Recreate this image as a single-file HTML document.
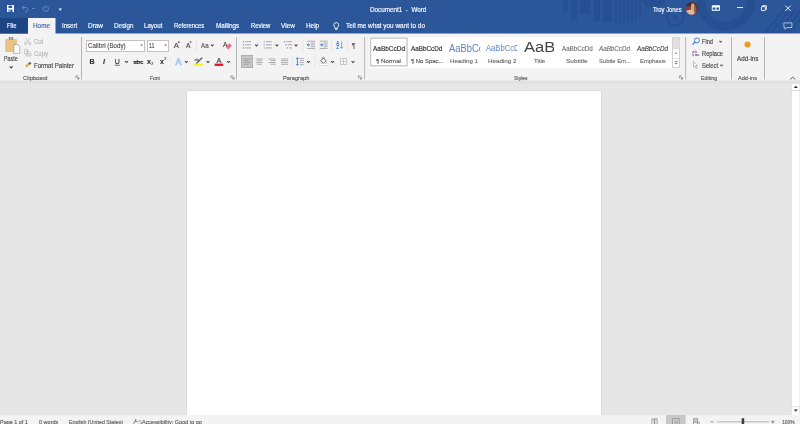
<!DOCTYPE html>
<html><head><meta charset="utf-8"><title>Document1 - Word</title>
<style>
html,body{margin:0;padding:0;}
body{width:800px;height:424px;overflow:hidden;position:relative;background:linear-gradient(to bottom,#2b579a 0,#2b579a 33.5px,#f3f3f3 33.5px,#f3f3f3 80.5px,#e6e6e6 80.5px,#e6e6e6 415px,#f3f3f3 415px);font-family:"Liberation Sans",sans-serif;}
.t{position:absolute;white-space:nowrap;line-height:1;-webkit-text-stroke:0.14px;}
.b{position:absolute;display:block;overflow:visible;}
#root{position:absolute;left:0;top:0;width:800px;height:424px;overflow:hidden;will-change:transform;}
</style></head><body><div id="root">
<svg class="b" style="left:0px;top:70px" width="800" height="345"><rect x="0.00" y="0.00" width="800.00" height="345.00" fill="#e6e6e6"/></svg>
<svg class="b" style="left:0px;top:30px" width="800" height="51"><rect x="0.00" y="0.00" width="800.00" height="50.50" fill="#f3f3f3"/></svg>
<svg class="b" style="left:0px;top:0px" width="800" height="34"><rect x="0.00" y="0.00" width="800.00" height="33.50" fill="#2b579a"/></svg>
<svg class="b" style="left:0px;top:0px" width="801" height="35" viewBox="0.00 0.00 801 35"><defs><clipPath id="tb"><rect x="0" y="0" width="800" height="33"/></clipPath></defs><g clip-path="url(#tb)"><rect x="563" y="0" width="5" height="12" fill="#264f91"/><rect x="571" y="0" width="6" height="20" fill="#264f91"/><rect x="580" y="0" width="10" height="14" fill="#264f91"/><rect x="594" y="0" width="6" height="21" fill="#264f91"/><rect x="603" y="0" width="9" height="22" fill="#264f91"/><rect x="615" y="0" width="2" height="24" fill="#264f91"/><rect x="619" y="0" width="2" height="23" fill="#264f91"/><rect x="623" y="0" width="2" height="24" fill="#264f91"/><rect x="627" y="0" width="2" height="22" fill="#264f91"/><rect x="631" y="0" width="2" height="23" fill="#264f91"/><rect x="635" y="0" width="2" height="20" fill="#264f91"/><rect x="639" y="0" width="2" height="18" fill="#264f91"/><circle cx="675.5" cy="17.5" r="2.6" fill="#264f91"/><circle cx="675.5" cy="17.5" r="8.4" fill="none" stroke="#264f91" stroke-width="2.3"/><path d="M641 0 H666 Q663 7.5 652 7.5 Q644 7.5 641 0 Z" fill="#264f91"/><circle cx="726" cy="1" r="25" fill="none" stroke="#264f91" stroke-width="9"/><path d="M765 33.5 L784 9" stroke="#264f91" stroke-width="2.5" fill="none"/><path d="M771 33.5 L790 9" stroke="#264f91" stroke-width="2.5" fill="none"/><path d="M777 33.5 L796 9" stroke="#264f91" stroke-width="2.5" fill="none"/><path d="M783 33.5 L802 9" stroke="#264f91" stroke-width="2.5" fill="none"/><path d="M789 33.5 L808 9" stroke="#264f91" stroke-width="2.5" fill="none"/><path d="M703 12 L715 27" stroke="#2b579a" stroke-width="0.8" fill="none"/><path d="M708 12 L720 27" stroke="#2b579a" stroke-width="0.8" fill="none"/><path d="M713 12 L725 27" stroke="#2b579a" stroke-width="0.8" fill="none"/><path d="M718 12 L730 27" stroke="#2b579a" stroke-width="0.8" fill="none"/></g></svg>
<svg class="b" style="left:0px;top:18px" width="28" height="16"><rect x="0.00" y="0.00" width="28.00" height="15.50" fill="#1d4584"/></svg>
<svg class="b" style="left:28px;top:18px" width="28" height="16"><rect x="0.00" y="0.00" width="27.50" height="16.00" fill="#f3f3f3"/></svg>
<svg class="b" style="left:0px;top:80px" width="800" height="4"><rect x="0.00" y="0.60" width="800.00" height="3.20" fill="#e1e1e1"/></svg>
<div class="b" style="left:186.80px;top:91.30px;width:414.20px;height:324.00px;background:#fff;box-shadow:0 0 1px rgba(0,0,0,0.25);"></div>
<svg class="b" style="left:791px;top:83px" width="9" height="332"><rect x="0.30" y="0.40" width="8.70" height="331.60" fill="#fff"/></svg>
<svg class="b" style="left:791px;top:83px" width="1" height="332"><rect x="0.20" y="0.40" width="0.60" height="331.60" fill="#d6d6d6"/></svg>
<svg class="b" style="left:799px;top:83px" width="1" height="332"><rect x="0.50" y="0.40" width="0.50" height="331.60" fill="#dcdcdc"/></svg>
<svg class="b" style="left:791px;top:83px" width="9" height="1"><rect x="0.30" y="0.30" width="8.70" height="0.50" fill="#d6d6d6"/></svg>
<svg class="b" style="left:791px;top:90px" width="9" height="1"><rect x="0.50" y="0.00" width="8.50" height="1.00" fill="#d9d9d9"/></svg>
<svg class="b" style="left:791px;top:406px" width="9" height="2"><rect x="0.50" y="0.40" width="8.50" height="0.80" fill="#d9d9d9"/></svg>
<svg class="b" style="left:793px;top:409px" width="6" height="4" viewBox="-0.70 -0.55 6 4"><path d="M0 0 L4.2 0 L2.1 2.1 Z" fill="#333"/></svg>
<svg class="b" style="left:793px;top:85px" width="6" height="4" viewBox="-0.80 -0.60 6 4"><path d="M0 2.3 L2 0 L4 2.3 Z" fill="#333"/></svg>
<svg class="b" style="left:0px;top:415px" width="800" height="9"><rect x="0.00" y="0.00" width="800.00" height="9.00" fill="#f3f3f3"/></svg>
<svg class="b" style="left:7px;top:5px" width="8" height="8" viewBox="0.00 0.00 8 8"><path d="M0 0H7V7H0Z" fill="#fff"/><rect x="1.5" y="0.6" width="3.6" height="2.4" fill="#2b579a"/><rect x="1.6" y="4.6" width="3.8" height="2.4" fill="#2b579a"/><rect x="2.4" y="5.2" width="1" height="1.4" fill="#fff"/></svg>
<svg class="b" style="left:21px;top:5px" width="11" height="8" viewBox="-0.50 0.00 11 8"><path d="M0.8 2.6 H5.2 A2.3 2.3 0 0 1 5.2 6.6 H3.5" fill="none" stroke="#6f8fc6" stroke-width="0.9"/><path d="M2.8 0.6 L0.8 2.6 L2.8 4.6" fill="none" stroke="#6f8fc6" stroke-width="0.9"/></svg>
<svg class="b" style="left:32px;top:8px" width="3" height="1"><rect x="0.00" y="0.20" width="3.00" height="0.80" fill="#6f8fc6"/></svg>
<svg class="b" style="left:42px;top:5px" width="9" height="8" viewBox="0.00 0.00 9 8"><path d="M5.2 1.4 A2.7 2.7 0 1 1 2.4 1.4" fill="none" stroke="#6f8fc6" stroke-width="0.9"/><path d="M3.8 0.3 V3.2" stroke="#6f8fc6" stroke-width="0.9"/></svg>
<svg class="b" style="left:58px;top:8px" width="5" height="4" viewBox="-0.50 -0.50 5 4"><path d="M0 0H3.5L1.75 2.5Z" fill="#e8eef8"/></svg>
<div class="t" style="left:370.00px;top:7.00px;font-size:6.6px;color:#fff;transform:scaleX(0.9577);transform-origin:0 0;">Document1 &nbsp;-&nbsp; Word</div>
<div class="t" style="left:652.50px;top:7.00px;font-size:6.6px;color:#fff;transform:scaleX(0.8896);transform-origin:0 0;">Troy Jones</div>
<svg class="b" style="left:685px;top:1px" width="15" height="15" viewBox="-0.50 -0.90 15 15"><defs><clipPath id="av"><circle cx="6.5" cy="6.5" r="6.4"/></clipPath></defs><g clip-path="url(#av)"><rect width="13" height="13" fill="#3f2c36"/><path d="M7 0 H13 V13 H9 Z" fill="#5d3a33"/><ellipse cx="2.6" cy="7" rx="2.6" ry="3" fill="#8c3d33"/><ellipse cx="7.2" cy="6" rx="1.9" ry="4.6" fill="#d7a58e"/><ellipse cx="5" cy="10.6" rx="4.6" ry="2.8" fill="#e2b4a2"/><ellipse cx="9.6" cy="8" rx="1.2" ry="3.4" fill="#9a5c4a"/></g></svg>
<svg class="b" style="left:711px;top:5px" width="11" height="7" viewBox="-0.80 -0.30 11 7"><rect x="0" y="0" width="8.2" height="5.4" rx="0.6" fill="#fff"/><rect x="0.9" y="2.2" width="2.7" height="2.2" fill="#2b579a"/><rect x="4.6" y="2.2" width="2.7" height="2.2" fill="#2b579a"/></svg>
<svg class="b" style="left:737px;top:7px" width="6" height="1"><rect x="0.00" y="0.00" width="6.00" height="0.90" fill="#fff"/></svg>
<svg class="b" style="left:761px;top:5px" width="7" height="8" viewBox="0.00 -0.20 7 8"><rect x="0.45" y="1.45" width="3.9" height="3.9" rx="0.5" fill="none" stroke="#fff" stroke-width="0.9"/><path d="M1.5 1.4 V0.45 H5.3 V4.3 H4.4" fill="none" stroke="#fff" stroke-width="0.9"/></svg>
<svg class="b" style="left:785px;top:5px" width="7" height="8" viewBox="0.00 -0.30 7 8"><path d="M0.3 0.3 L5.7 5.7 M5.7 0.3 L0.3 5.7" stroke="#fff" stroke-width="0.9"/></svg>
<svg class="b" style="left:783px;top:22px" width="11" height="9" viewBox="-0.50 -0.50 11 9"><path d="M0.4 0.4 H8.4 V5 H3.4 L1.6 6.9 V5 H0.4 Z" fill="none" stroke="#dfe7f5" stroke-width="0.7"/></svg>
<div class="t" style="left:6.60px;top:23.00px;font-size:6.6px;color:#fff;transform:scaleX(0.8847);transform-origin:0 0;">File</div>
<div class="t" style="left:33.00px;top:23.00px;font-size:6.6px;color:#4767a3;transform:scaleX(0.9663);transform-origin:0 0;">Home</div>
<div class="t" style="left:61.60px;top:23.00px;font-size:6.6px;color:#fff;transform:scaleX(0.9212);transform-origin:0 0;">Insert</div>
<div class="t" style="left:87.60px;top:23.00px;font-size:6.6px;color:#fff;transform:scaleX(0.9746);transform-origin:0 0;">Draw</div>
<div class="t" style="left:113.60px;top:23.00px;font-size:6.6px;color:#fff;transform:scaleX(0.9449);transform-origin:0 0;">Design</div>
<div class="t" style="left:144.40px;top:23.00px;font-size:6.6px;color:#fff;transform:scaleX(0.9287);transform-origin:0 0;">Layout</div>
<div class="t" style="left:174.00px;top:23.00px;font-size:6.6px;color:#fff;transform:scaleX(0.8982);transform-origin:0 0;">References</div>
<div class="t" style="left:215.80px;top:23.00px;font-size:6.6px;color:#fff;transform:scaleX(0.9592);transform-origin:0 0;">Mailings</div>
<div class="t" style="left:250.70px;top:23.00px;font-size:6.6px;color:#fff;transform:scaleX(0.8925);transform-origin:0 0;">Review</div>
<div class="t" style="left:281.00px;top:23.00px;font-size:6.6px;color:#fff;transform:scaleX(0.9727);transform-origin:0 0;">View</div>
<div class="t" style="left:305.90px;top:23.00px;font-size:6.6px;color:#fff;transform:scaleX(0.9659);transform-origin:0 0;">Help</div>
<svg class="b" style="left:333px;top:22px" width="8" height="10" viewBox="0.00 0.00 8 10"><path d="M3.25 0.5 A2.6 2.6 0 0 1 4.6 5.2 V6.4 H1.9 V5.2 A2.6 2.6 0 0 1 3.25 0.5 Z" fill="none" stroke="#fff" stroke-width="0.85"/><path d="M2.1 7.4 H4.4" stroke="#fff" stroke-width="0.85"/></svg>
<div class="t" style="left:346.00px;top:23.00px;font-size:6.6px;color:#fff;transform:scaleX(0.9708);transform-origin:0 0;">Tell me what you want to do</div>
<svg class="b" style="left:81px;top:37px" width="1" height="43"><rect x="0.10" y="0.00" width="0.90" height="42.50" fill="#aeaeae"/></svg>
<svg class="b" style="left:236px;top:37px" width="1" height="43"><rect x="0.10" y="0.00" width="0.90" height="42.50" fill="#aeaeae"/></svg>
<svg class="b" style="left:364px;top:37px" width="2" height="43"><rect x="0.20" y="0.00" width="0.90" height="42.50" fill="#aeaeae"/></svg>
<svg class="b" style="left:685px;top:37px" width="2" height="43"><rect x="0.20" y="0.00" width="0.90" height="42.50" fill="#aeaeae"/></svg>
<svg class="b" style="left:731px;top:37px" width="1" height="43"><rect x="0.10" y="0.00" width="0.90" height="42.50" fill="#aeaeae"/></svg>
<svg class="b" style="left:764px;top:37px" width="1" height="43"><rect x="0.00" y="0.00" width="0.90" height="42.50" fill="#aeaeae"/></svg>
<svg class="b" style="left:170px;top:56px" width="1" height="11"><rect x="0.30" y="0.40" width="0.70" height="10.60" fill="#e2e2e2"/></svg>
<svg class="b" style="left:196px;top:40px" width="1" height="12"><rect x="0.30" y="0.00" width="0.70" height="12.00" fill="#e2e2e2"/></svg>
<svg class="b" style="left:302px;top:40px" width="2" height="12"><rect x="0.70" y="0.00" width="0.70" height="12.00" fill="#e2e2e2"/></svg>
<svg class="b" style="left:331px;top:40px" width="1" height="12"><rect x="0.10" y="0.00" width="0.70" height="12.00" fill="#e2e2e2"/></svg>
<svg class="b" style="left:346px;top:40px" width="2" height="12"><rect x="0.90" y="0.00" width="0.70" height="12.00" fill="#e2e2e2"/></svg>
<svg class="b" style="left:291px;top:56px" width="2" height="12"><rect x="0.90" y="0.00" width="0.70" height="12.00" fill="#e2e2e2"/></svg>
<svg class="b" style="left:314px;top:56px" width="2" height="12"><rect x="0.70" y="0.00" width="0.70" height="12.00" fill="#e2e2e2"/></svg>
<svg class="b" style="left:5px;top:38px" width="17" height="17" viewBox="0.00 0.00 17 17"><rect x="0.2" y="0.9" width="11.8" height="13" rx="0.8" fill="#eac282"/><rect x="3.8" y="-0.9" width="4.6" height="2.4" rx="0.9" fill="#7a7a7a"/><rect x="5" y="-0.3" width="2.2" height="0.9" fill="#f3f3f3"/><path d="M8.8 6.5 H12.6 L14.8 8.7 V15.4 H8.8 Z" fill="#fff" stroke="#8a8a8a" stroke-width="0.6"/></svg>
<div class="t" style="left:4.40px;top:56.00px;font-size:6.6px;color:#444;transform:scaleX(0.8119);transform-origin:0 0;">Paste</div>
<svg class="b" style="left:9px;top:65px" width="6" height="5" viewBox="-0.20 -0.95 6 5"><path d="M0.5 0.5 L2.0 2.0 L3.5 0.5" fill="none" stroke="#424242" stroke-width="1.05"/></svg>
<svg class="b" style="left:24px;top:38px" width="9" height="8" viewBox="0.00 0.00 9 8"><path d="M1.5 0.3 L5.3 4.8 M6 0.3 L2.2 4.8" stroke="#b4b4b4" stroke-width="0.7" fill="none"/><circle cx="1.6" cy="5.5" r="1.1" fill="none" stroke="#b4b4b4" stroke-width="0.7"/><circle cx="5.9" cy="5.5" r="1.1" fill="none" stroke="#b4b4b4" stroke-width="0.7"/></svg>
<div class="t" style="left:34.00px;top:39.00px;font-size:6.6px;color:#b4b4b4;transform:scaleX(0.8767);transform-origin:0 0;">Cut</div>
<svg class="b" style="left:24px;top:49px" width="9" height="9" viewBox="0.00 0.00 9 9"><path d="M0.4 0.4 H3.6 V5 H0.4 Z M2.6 2.4 H5.4 L6.8 3.8 V7 H2.6 Z" fill="#f3f3f3" stroke="#b4b4b4" stroke-width="0.7"/><path d="M3.6 4.6H6 M3.6 5.8H6" stroke="#b4b4b4" stroke-width="0.5"/></svg>
<div class="t" style="left:34.00px;top:51.00px;font-size:6.6px;color:#b4b4b4;transform:scaleX(0.9087);transform-origin:0 0;">Copy</div>
<svg class="b" style="left:24px;top:61px" width="9" height="9" viewBox="-0.50 -0.50 9 9"><path d="M0.5 4.2 L3.4 1.8 L5 3.6 L2.2 6.2 Z" fill="#e9b24a"/><path d="M3.6 1.6 L5.6 0.4 L6.8 1.8 L5.2 3.4 Z" fill="#555"/></svg>
<div class="t" style="left:34.00px;top:63.00px;font-size:6.6px;color:#444;transform:scaleX(0.9172);transform-origin:0 0;">Format Painter</div>
<div class="t" style="left:22.50px;top:75.00px;font-size:6px;color:#555;transform:scaleX(0.9538);transform-origin:0 0;">Clipboard</div>
<svg class="b" style="left:75px;top:75px" width="6" height="6" viewBox="-0.50 -0.50 6 6"><path d="M0.4 2.8 V0.4 H2.8" fill="none" stroke="#777" stroke-width="0.7"/><path d="M1.4 1.4 L3.5 3.5 M3.5 1.8 V3.5 H1.8" fill="none" stroke="#666" stroke-width="0.7"/></svg>
<div class="b" style="left:86.20px;top:39.50px;width:59.00px;height:12.00px;background:#fff;border:0.7px solid #c2c2c2;box-sizing:border-box;"></div>
<div class="t" style="left:87.80px;top:43.00px;font-size:6.6px;color:#505050;transform:scaleX(0.9411);transform-origin:0 0;">Calibri (Body)</div>
<svg class="b" style="left:140px;top:44px" width="4" height="3" viewBox="-0.20 -0.65 4 3"><path d="M0 0 L2.6 0 L1.3 1.3 Z" fill="#444"/></svg>
<div class="b" style="left:146.60px;top:39.50px;width:22.80px;height:12.00px;background:#fff;border:0.7px solid #c2c2c2;box-sizing:border-box;"></div>
<div class="t" style="left:148.60px;top:43.00px;font-size:6.6px;color:#505050;transform:scaleX(0.8164);transform-origin:0 0;">11</div>
<svg class="b" style="left:164px;top:44px" width="4" height="3" viewBox="-0.20 -0.65 4 3"><path d="M0 0 L2.6 0 L1.3 1.3 Z" fill="#444"/></svg>
<div class="t" style="left:173.80px;top:42.00px;font-size:7.6px;color:#444;">A</div>
<svg class="b" style="left:177px;top:41px" width="5" height="3" viewBox="-0.60 0.00 5 3"><path d="M0 1.8 L1.3 0 L2.6 1.8Z" fill="#444"/></svg>
<div class="t" style="left:186.00px;top:43.00px;font-size:6.6px;color:#444;">A</div>
<svg class="b" style="left:189px;top:41px" width="4" height="4" viewBox="-0.40 -0.60 4 4"><path d="M0 0 L1.2 1.6 L2.4 0Z" fill="#444"/></svg>
<div class="t" style="left:200.60px;top:43.00px;font-size:6.4px;color:#555;transform:scaleX(0.9709);transform-origin:0 0;">Aa</div>
<svg class="b" style="left:210px;top:44px" width="6" height="4" viewBox="-0.40 -0.00 6 4"><path d="M0.5 0.5 L1.9 1.9 L3.3 0.5" fill="none" stroke="#424242" stroke-width="1.05"/></svg>
<div class="t" style="left:223.00px;top:42.00px;font-size:6.6px;color:#444;">A</div>
<svg class="b" style="left:225px;top:43px" width="8" height="8" viewBox="-0.50 0.00 8 8"><path d="M0.2 4 L3.8 0.2 L6.4 2.6 L2.8 6.4 Z" fill="#e46f88"/></svg>
<div class="t" style="left:89.60px;top:58.00px;font-size:7px;color:#333;font-weight:bold;">B</div>
<div class="t" style="left:103.00px;top:58.00px;font-size:7px;color:#333;font-weight:bold;font-style:italic;">I</div>
<div class="t" style="left:114.80px;top:58.00px;font-size:7px;color:#333;">U</div>
<svg class="b" style="left:114px;top:64px" width="6" height="2"><rect x="0.80" y="0.80" width="5.00" height="0.70" fill="#333"/></svg>
<svg class="b" style="left:124px;top:60px" width="6" height="4" viewBox="-0.60 -0.60 6 4"><path d="M0.5 0.5 L1.9 1.9 L3.3 0.5" fill="none" stroke="#424242" stroke-width="1.05"/></svg>
<div class="t" style="left:133.40px;top:60.00px;font-size:5.8px;color:#333;font-weight:bold;">abc</div>
<svg class="b" style="left:133px;top:61px" width="10" height="1"><rect x="0.20" y="0.20" width="9.00" height="0.60" fill="#333"/></svg>
<div class="t" style="left:147.00px;top:58.00px;font-size:7px;color:#333;font-weight:bold;">x</div>
<div class="t" style="left:151.20px;top:63.00px;font-size:3.6px;color:#333;">2</div>
<div class="t" style="left:160.00px;top:58.00px;font-size:7px;color:#333;font-weight:bold;">x</div>
<div class="t" style="left:164.20px;top:58.00px;font-size:3.6px;color:#333;">2</div>
<svg class="b" style="left:175px;top:57px" width="9" height="10" viewBox="0.00 -0.60 9 10"><path d="M1 7.2 L3.5 1 L6 7.2 M1.9 5 H5.1" fill="none" stroke="#7ea9e6" stroke-width="1.5" stroke-linejoin="round" stroke-linecap="round"/><path d="M1 7.2 L3.5 1 L6 7.2 M1.9 5 H5.1" fill="none" stroke="#f2f7fe" stroke-width="0.55"/></svg>
<svg class="b" style="left:184px;top:60px" width="6" height="4" viewBox="-0.40 -0.60 6 4"><path d="M0.5 0.5 L1.9 1.9 L3.3 0.5" fill="none" stroke="#424242" stroke-width="1.05"/></svg>
<svg class="b" style="left:194px;top:57px" width="10" height="8" viewBox="-0.50 -0.50 10 8"><path d="M7.4 0.5 L2.1 5.8" stroke="#5a5a5a" stroke-width="1.3" stroke-linecap="round"/><text x="0" y="3.2" font-size="3.8" font-weight="bold" font-family="Liberation Sans, sans-serif" fill="#444">ab</text></svg>
<svg class="b" style="left:193px;top:63px" width="10" height="3"><rect x="0.60" y="0.60" width="9.20" height="2.30" fill="#f8f520"/></svg>
<svg class="b" style="left:206px;top:60px" width="5" height="4" viewBox="-0.10 -0.60 5 4"><path d="M0.5 0.5 L1.9 1.9 L3.3 0.5" fill="none" stroke="#424242" stroke-width="1.05"/></svg>
<div class="t" style="left:216.40px;top:57.00px;font-size:7.4px;color:#333;">A</div>
<svg class="b" style="left:214px;top:63px" width="10" height="3"><rect x="0.60" y="0.60" width="8.60" height="2.30" fill="#e81123"/></svg>
<svg class="b" style="left:226px;top:60px" width="6" height="4" viewBox="-0.60 -0.60 6 4"><path d="M0.5 0.5 L1.9 1.9 L3.3 0.5" fill="none" stroke="#424242" stroke-width="1.05"/></svg>
<div class="t" style="left:150.00px;top:75.00px;font-size:6px;color:#555;transform:scaleX(0.8322);transform-origin:0 0;">Font</div>
<svg class="b" style="left:230px;top:75px" width="6" height="6" viewBox="-0.60 -0.50 6 6"><path d="M0.4 2.8 V0.4 H2.8" fill="none" stroke="#777" stroke-width="0.7"/><path d="M1.4 1.4 L3.5 3.5 M3.5 1.8 V3.5 H1.8" fill="none" stroke="#666" stroke-width="0.7"/></svg>
<svg class="b" style="left:242px;top:40px" width="11" height="11" viewBox="-0.70 -0.50 11 11"><rect x="0.2" y="0.6" width="1.3" height="1.3" fill="#7f97c4"/><rect x="2.6" y="0.85" width="5.700000000000001" height="0.8" fill="#989898"/><rect x="0.2" y="3.6999999999999997" width="1.3" height="1.3" fill="#7f97c4"/><rect x="2.6" y="3.9499999999999997" width="5.700000000000001" height="0.8" fill="#989898"/><rect x="0.2" y="6.800000000000001" width="1.3" height="1.3" fill="#7f97c4"/><rect x="2.6" y="7.050000000000001" width="5.700000000000001" height="0.8" fill="#989898"/></svg>
<svg class="b" style="left:254px;top:44px" width="6" height="4" viewBox="-0.60 -0.00 6 4"><path d="M0.5 0.5 L1.9 1.9 L3.3 0.5" fill="none" stroke="#424242" stroke-width="1.05"/></svg>
<svg class="b" style="left:263px;top:40px" width="10" height="11" viewBox="-0.40 -0.50 10 11"><rect x="0.4" y="0.29999999999999993" width="0.7" height="1.9" fill="#7f97c4"/><rect x="2.6" y="0.85" width="5.700000000000001" height="0.8" fill="#989898"/><rect x="0.4" y="3.4" width="0.7" height="1.9" fill="#7f97c4"/><rect x="2.6" y="3.9499999999999997" width="5.700000000000001" height="0.8" fill="#989898"/><rect x="0.4" y="6.5" width="0.7" height="1.9" fill="#7f97c4"/><rect x="2.6" y="7.050000000000001" width="5.700000000000001" height="0.8" fill="#989898"/></svg>
<svg class="b" style="left:275px;top:44px" width="5" height="4" viewBox="-0.00 -0.00 5 4"><path d="M0.5 0.5 L1.9 1.9 L3.3 0.5" fill="none" stroke="#424242" stroke-width="1.05"/></svg>
<svg class="b" style="left:283px;top:40px" width="11" height="11" viewBox="-0.80 -0.50 11 11"><rect x="0.2" y="0.6" width="1.2" height="1.3" fill="#7f97c4"/><rect x="2.6" y="0.85" width="5.700000000000001" height="0.8" fill="#989898"/><rect x="1.5" y="3.6999999999999997" width="1.2" height="1.3" fill="#7f97c4"/><rect x="3.9000000000000004" y="3.9499999999999997" width="4.4" height="0.8" fill="#989898"/><rect x="2.8000000000000003" y="6.800000000000001" width="1.2" height="1.3" fill="#7f97c4"/><rect x="5.2" y="7.050000000000001" width="3.1000000000000005" height="0.8" fill="#989898"/></svg>
<svg class="b" style="left:294px;top:44px" width="5" height="4" viewBox="-0.10 -0.00 5 4"><path d="M0.5 0.5 L1.9 1.9 L3.3 0.5" fill="none" stroke="#424242" stroke-width="1.05"/></svg>
<svg class="b" style="left:306px;top:40px" width="11" height="11" viewBox="-0.90 -0.50 11 11"><rect x="0.3" y="0.25" width="7.8" height="0.75" fill="#989898"/><rect x="4" y="2.15" width="4.1" height="0.75" fill="#989898"/><rect x="4" y="4.050000000000001" width="4.1" height="0.75" fill="#989898"/><rect x="4" y="5.95" width="4.1" height="0.75" fill="#989898"/><rect x="0.3" y="7.65" width="7.8" height="0.75" fill="#989898"/><path d="M0.6 4.4 H3.3 M1.8 2.9 L0.3 4.4 L1.8 5.9" fill="none" stroke="#2f6fc4" stroke-width="0.9"/></svg>
<svg class="b" style="left:319px;top:40px" width="10" height="11" viewBox="-0.50 -0.50 10 11"><rect x="0.3" y="0.25" width="7.8" height="0.75" fill="#989898"/><rect x="4" y="2.15" width="4.1" height="0.75" fill="#989898"/><rect x="4" y="4.050000000000001" width="4.1" height="0.75" fill="#989898"/><rect x="4" y="5.95" width="4.1" height="0.75" fill="#989898"/><rect x="0.3" y="7.65" width="7.8" height="0.75" fill="#989898"/><path d="M0.3 4.4 H3 M1.8 2.9 L3.3 4.4 L1.8 5.9" fill="none" stroke="#2f6fc4" stroke-width="0.9"/></svg>
<svg class="b" style="left:336px;top:41px" width="9" height="10" viewBox="0.00 -0.20 9 10"><text x="0" y="3.6" font-size="4.8" font-weight="bold" font-family="Liberation Sans, sans-serif" fill="#2f6fc4">A</text><text x="0.2" y="7.8" font-size="4.8" font-weight="bold" font-family="Liberation Sans, sans-serif" fill="#2f6fc4">Z</text><path d="M5.6 0.4 V7 M4.3 5.7 L5.6 7.2 L6.9 5.7" fill="none" stroke="#777" stroke-width="0.7"/></svg>
<div class="t" style="left:351.60px;top:42.00px;font-size:8px;color:#5a5a5a;-webkit-text-stroke:0;">¶</div>
<div class="b" style="left:241.00px;top:55.20px;width:11.80px;height:12.50px;background:#c6c6c6;border:0.7px solid #b0b0b0;box-sizing:border-box;"></div>
<svg class="b" style="left:243px;top:58px" width="9" height="9" viewBox="-0.40 -0.20 9 9"><rect x="0.00" y="0.40" width="7.2" height="0.75" fill="#989898"/><rect x="0.00" y="2.15" width="5" height="0.75" fill="#989898"/><rect x="0.00" y="3.90" width="7.2" height="0.75" fill="#989898"/><rect x="0.00" y="5.65" width="5" height="0.75" fill="#989898"/></svg>
<svg class="b" style="left:255px;top:58px" width="9" height="9" viewBox="-0.70 -0.20 9 9"><rect x="0.00" y="0.40" width="7.2" height="0.75" fill="#989898"/><rect x="1.10" y="2.15" width="5" height="0.75" fill="#989898"/><rect x="0.00" y="3.90" width="7.2" height="0.75" fill="#989898"/><rect x="1.10" y="5.65" width="5" height="0.75" fill="#989898"/></svg>
<svg class="b" style="left:268px;top:58px" width="9" height="9" viewBox="-0.40 -0.20 9 9"><rect x="0.00" y="0.40" width="7.2" height="0.75" fill="#989898"/><rect x="2.20" y="2.15" width="5" height="0.75" fill="#989898"/><rect x="0.00" y="3.90" width="7.2" height="0.75" fill="#989898"/><rect x="2.20" y="5.65" width="5" height="0.75" fill="#989898"/></svg>
<svg class="b" style="left:281px;top:58px" width="9" height="9" viewBox="0.00 -0.20 9 9"><rect x="0.00" y="0.40" width="7.2" height="0.75" fill="#989898"/><rect x="0.00" y="2.15" width="7.2" height="0.75" fill="#989898"/><rect x="0.00" y="3.90" width="7.2" height="0.75" fill="#989898"/><rect x="0.00" y="5.65" width="7.2" height="0.75" fill="#989898"/></svg>
<svg class="b" style="left:296px;top:57px" width="9" height="10" viewBox="0.00 -0.30 9 10"><path d="M1.4 0.4 V8 M0.2 1.8 L1.4 0.4 L2.6 1.8 M0.2 6.6 L1.4 8 L2.6 6.6" fill="none" stroke="#2f6fc4" stroke-width="0.8"/><rect x="3.8" y="0.8" width="4" height="0.75" fill="#989898"/><rect x="3.8" y="2.9" width="4" height="0.75" fill="#989898"/><rect x="3.8" y="5" width="4" height="0.75" fill="#989898"/><rect x="3.8" y="7.1" width="4" height="0.75" fill="#989898"/></svg>
<svg class="b" style="left:306px;top:60px" width="6" height="4" viewBox="-0.50 -0.60 6 4"><path d="M0.5 0.5 L1.9 1.9 L3.3 0.5" fill="none" stroke="#424242" stroke-width="1.05"/></svg>
<svg class="b" style="left:319px;top:56px" width="10" height="11" viewBox="-0.40 -0.80 10 11"><path d="M1.2 4 L4 1.2 L6.8 4 L4 6.4 Z" fill="#fff" stroke="#555" stroke-width="0.85"/><path d="M3 2 V0.6 Q4 -0.2 5 0.8 V2" fill="none" stroke="#666" stroke-width="0.6"/><path d="M7.2 4.4 Q8 5.6 7.4 6 Q6.8 5.6 7.2 4.4Z" fill="#666"/><rect x="0.2" y="7" width="7.8" height="1.4" fill="#fff" stroke="#bbb" stroke-width="0.4"/></svg>
<svg class="b" style="left:330px;top:60px" width="6" height="4" viewBox="-0.60 -0.60 6 4"><path d="M0.5 0.5 L1.9 1.9 L3.3 0.5" fill="none" stroke="#424242" stroke-width="1.05"/></svg>
<svg class="b" style="left:340px;top:58px" width="9" height="8" viewBox="0.00 0.00 9 8"><rect x="0.4" y="0.4" width="6.3" height="6.1" fill="#fafafa" stroke="#bcbcbc" stroke-width="0.8"/><path d="M3.55 0.4 V6.5 M0.4 3.45 H6.7" stroke="#bcbcbc" stroke-width="0.8"/></svg>
<svg class="b" style="left:351px;top:60px" width="5" height="4" viewBox="-0.10 -0.60 5 4"><path d="M0.5 0.5 L1.9 1.9 L3.3 0.5" fill="none" stroke="#424242" stroke-width="1.05"/></svg>
<div class="t" style="left:283.00px;top:75.00px;font-size:6px;color:#555;transform:scaleX(0.9418);transform-origin:0 0;">Paragraph</div>
<svg class="b" style="left:358px;top:75px" width="5" height="6" viewBox="0.00 -0.50 5 6"><path d="M0.4 2.8 V0.4 H2.8" fill="none" stroke="#777" stroke-width="0.7"/><path d="M1.4 1.4 L3.5 3.5 M3.5 1.8 V3.5 H1.8" fill="none" stroke="#666" stroke-width="0.7"/></svg>
<svg class="b" style="left:368px;top:37px" width="305" height="32"><rect x="0.80" y="0.00" width="303.90" height="31.20" fill="#fff"/></svg>
<svg class="b" style="left:369px;top:37px" width="40" height="31" viewBox="-0.90 -0.40 40 31"><rect x="0.65" y="0.65" width="36.5" height="27.8" fill="#fff" stroke="#c4c4c4" stroke-width="1.3"/></svg>
<div class="t" style="left:373.00px;top:46.00px;font-size:6.4px;color:#2a2a2a;transform:scaleX(1.0119);transform-origin:0 0;">AaBbCcDd</div>
<div class="t" style="left:376.00px;top:58.00px;font-size:6px;color:#555;transform:scaleX(1.0316);transform-origin:0 0;">¶ Normal</div>
<div class="t" style="left:411.00px;top:46.00px;font-size:6.4px;color:#2a2a2a;transform:scaleX(0.9897);transform-origin:0 0;">AaBbCcDd</div>
<div class="t" style="left:410.60px;top:58.00px;font-size:6px;color:#555;transform:scaleX(0.9846);transform-origin:0 0;">¶ No Spac...</div>
<div class="t" style="left:448.80px;top:44.00px;font-size:10.2px;color:#5c80c2;width:34.11555232558142px;overflow:hidden;transform:scaleX(0.9204);transform-origin:0 0;-webkit-text-stroke:0;">AaBbCc</div>
<div class="t" style="left:449.80px;top:58.00px;font-size:6px;color:#666;transform:scaleX(1.0234);transform-origin:0 0;-webkit-text-stroke:0.1px;">Heading 1</div>
<div class="t" style="left:486.30px;top:44.00px;font-size:9px;color:#6284c4;width:36.80261194029857px;overflow:hidden;transform:scaleX(0.8478);transform-origin:0 0;-webkit-text-stroke:0;">AaBbCcD</div>
<div class="t" style="left:487.50px;top:58.00px;font-size:6px;color:#666;transform:scaleX(1.0417);transform-origin:0 0;-webkit-text-stroke:0.1px;">Heading 2</div>
<div class="t" style="left:524.00px;top:39.00px;font-size:15.4px;color:#444;width:27.513578274760427px;overflow:hidden;transform:scaleX(1.0758);transform-origin:0 0;-webkit-text-stroke:0;">AaB</div>
<div class="t" style="left:533.80px;top:58.00px;font-size:6px;color:#666;transform:scaleX(1.0067);transform-origin:0 0;-webkit-text-stroke:0.1px;">Title</div>
<div class="t" style="left:562.00px;top:46.00px;font-size:6.4px;color:#666;transform:scaleX(0.9739);transform-origin:0 0;-webkit-text-stroke:0.08px;">AaBbCcDd</div>
<div class="t" style="left:566.30px;top:58.00px;font-size:6px;color:#666;transform:scaleX(1.0742);transform-origin:0 0;-webkit-text-stroke:0.1px;">Subtitle</div>
<div class="t" style="left:599.40px;top:46.00px;font-size:6.4px;color:#666;font-style:italic;transform:scaleX(0.9771);transform-origin:0 0;-webkit-text-stroke:0.08px;">AaBbCcDd</div>
<div class="t" style="left:598.80px;top:58.00px;font-size:6px;color:#666;transform:scaleX(0.9728);transform-origin:0 0;-webkit-text-stroke:0.1px;">Subtle Em...</div>
<div class="t" style="left:637.00px;top:46.00px;font-size:6.4px;color:#333;font-style:italic;transform:scaleX(0.9802);transform-origin:0 0;-webkit-text-stroke:0.08px;">AaBbCcDd</div>
<div class="t" style="left:640.00px;top:58.00px;font-size:6px;color:#666;transform:scaleX(0.9718);transform-origin:0 0;-webkit-text-stroke:0.1px;">Emphasis</div>
<div class="b" style="left:672.30px;top:37.00px;width:7.70px;height:31.20px;background:#fff;border:0.6px solid #cfcfcf;box-sizing:border-box;"></div>
<svg class="b" style="left:672px;top:37px" width="8" height="12"><rect x="0.80" y="0.50" width="6.70" height="10.90" fill="#e0e0e0"/></svg>
<svg class="b" style="left:672px;top:48px" width="8" height="1"><rect x="0.30" y="0.40" width="7.70" height="0.60" fill="#cfcfcf"/></svg>
<svg class="b" style="left:672px;top:58px" width="8" height="1"><rect x="0.30" y="0.20" width="7.70" height="0.60" fill="#cfcfcf"/></svg>
<svg class="b" style="left:674px;top:52px" width="5" height="4" viewBox="-0.80 -0.70 5 4"><path d="M0 0 L2.8 0 L1.4 1.4 Z" fill="#555"/></svg>
<svg class="b" style="left:674px;top:61px" width="4" height="2"><rect x="0.60" y="0.40" width="3.20" height="0.70" fill="#555"/></svg>
<svg class="b" style="left:674px;top:62px" width="5" height="4" viewBox="-0.80 -0.90 5 4"><path d="M0 0 L2.8 0 L1.4 1.4 Z" fill="#555"/></svg>
<div class="t" style="left:513.80px;top:75.00px;font-size:6px;color:#555;transform:scaleX(0.8260);transform-origin:0 0;">Styles</div>
<svg class="b" style="left:679px;top:75px" width="5" height="6" viewBox="0.00 -0.50 5 6"><path d="M0.4 2.8 V0.4 H2.8" fill="none" stroke="#777" stroke-width="0.7"/><path d="M1.4 1.4 L3.5 3.5 M3.5 1.8 V3.5 H1.8" fill="none" stroke="#666" stroke-width="0.7"/></svg>
<svg class="b" style="left:692px;top:37px" width="9" height="9" viewBox="0.00 -0.40 9 9"><circle cx="4.9" cy="3" r="2.5" fill="none" stroke="#2f6fc4" stroke-width="0.9"/><path d="M3 4.8 L0.5 7.2" stroke="#2f6fc4" stroke-width="1.1"/></svg>
<div class="t" style="left:702.00px;top:39.00px;font-size:6.6px;color:#444;transform:scaleX(0.8575);transform-origin:0 0;">Find</div>
<svg class="b" style="left:718px;top:40px" width="6" height="4" viewBox="-0.80 -0.45 6 4"><path d="M0.5 0.5 L1.8 1.8 L3.1 0.5" fill="none" stroke="#666" stroke-width="1.05"/></svg>
<svg class="b" style="left:692px;top:49px" width="10" height="9" viewBox="0.00 -0.30 10 9"><text x="0.2" y="3.2" font-size="4" font-weight="bold" font-family="Liberation Sans, sans-serif" fill="#8a4a9a">ab</text><text x="3" y="7.2" font-size="4" font-weight="bold" font-family="Liberation Sans, sans-serif" fill="#555">ac</text><path d="M0.6 4 V6 H2 M1.2 5.2 L2 6 L1.2 6.8" fill="none" stroke="#2f6fc4" stroke-width="0.6"/></svg>
<div class="t" style="left:702.00px;top:51.00px;font-size:6.6px;color:#444;transform:scaleX(0.8677);transform-origin:0 0;">Replace</div>
<svg class="b" style="left:693px;top:61px" width="7" height="10" viewBox="0.00 -0.20 7 10"><path d="M0.5 0.5 V6 L1.9 4.8 L3 7.4 L3.9 7 L2.8 4.5 H4.6 Z" fill="#fff" stroke="#999" stroke-width="0.6"/></svg>
<div class="t" style="left:702.00px;top:63.00px;font-size:6.6px;color:#444;transform:scaleX(0.8730);transform-origin:0 0;">Select</div>
<svg class="b" style="left:719px;top:64px" width="6" height="4" viewBox="-0.70 -0.15 6 4"><path d="M0.5 0.5 L1.8 1.8 L3.1 0.5" fill="none" stroke="#666" stroke-width="1.05"/></svg>
<div class="t" style="left:700.60px;top:75.00px;font-size:6px;color:#555;transform:scaleX(0.8878);transform-origin:0 0;">Editing</div>
<svg class="b" style="left:744px;top:41px" width="8" height="8" viewBox="0.00 0.00 8 8"><circle cx="3.5" cy="3.5" r="3" fill="#f7941d"/></svg>
<div class="t" style="left:737.30px;top:56.00px;font-size:6.6px;color:#444;transform:scaleX(0.9616);transform-origin:0 0;">Add-ins</div>
<div class="t" style="left:738.00px;top:75.00px;font-size:6px;color:#555;transform:scaleX(0.9339);transform-origin:0 0;">Add-ins</div>
<svg class="b" style="left:790px;top:76px" width="7" height="6" viewBox="0.00 -0.60 7 6"><path d="M0.3 2.9 L2.8 0.5 L5.3 2.9" fill="none" stroke="#4a4a4a" stroke-width="0.9"/></svg>
<div class="t" style="left:-0.40px;top:420.00px;font-size:5.3px;color:#606060;transform:scaleX(1.0292);transform-origin:0 0;">Page 1 of 1</div>
<div class="t" style="left:38.50px;top:420.00px;font-size:5.3px;color:#606060;transform:scaleX(1.0406);transform-origin:0 0;">0 words</div>
<div class="t" style="left:68.60px;top:420.00px;font-size:5.3px;color:#606060;transform:scaleX(0.9987);transform-origin:0 0;">English (United States)</div>
<div class="t" style="left:142.00px;top:420.00px;font-size:5.3px;color:#606060;transform:scaleX(1.0310);transform-origin:0 0;">Accessibility: Good to go</div>
<svg class="b" style="left:133px;top:418px" width="9" height="8" viewBox="-0.50 -0.50 9 8"><circle cx="2.2" cy="1.6" r="0.8" fill="#555"/><path d="M0.5 5.5 V3.2 H4.2 M4.8 3 A1.8 1.8 0 1 1 4.8 5.4" fill="none" stroke="#555" stroke-width="0.6"/></svg>
<svg class="b" style="left:666px;top:415px" width="20" height="9"><rect x="0.00" y="0.00" width="19.60" height="9.00" fill="#c8c8c8"/></svg>
<svg class="b" style="left:651px;top:418px" width="8" height="7" viewBox="-0.50 -0.50 8 7"><path d="M0.4 0.4 H2.8 V5.5 M0.4 0.4 V5.5 M3.2 0.4 H5.6 V5.5 M3.2 0.4 V5.5" fill="none" stroke="#666" stroke-width="0.6"/></svg>
<svg class="b" style="left:672px;top:418px" width="9" height="7" viewBox="-0.50 -0.50 9 7"><rect x="0.3" y="0.3" width="6.2" height="5.5" fill="#f3f3f3" stroke="#666" stroke-width="0.6"/><path d="M1.2 1.6H5.6 M1.2 2.8H5.6 M1.2 4H5.6 M1.2 5.2H5.6" stroke="#666" stroke-width="0.5"/></svg>
<svg class="b" style="left:693px;top:418px" width="8" height="7" viewBox="0.00 -0.50 8 7"><rect x="0.3" y="0.3" width="4.4" height="5.5" fill="none" stroke="#666" stroke-width="0.6"/><path d="M1.2 1.6H3.8 M1.2 2.8H3.8 M1.2 4H3.8" stroke="#666" stroke-width="0.5"/><circle cx="5.4" cy="4.6" r="1.1" fill="#f3f3f3" stroke="#666" stroke-width="0.5"/></svg>
<svg class="b" style="left:710px;top:421px" width="4" height="2"><rect x="0.50" y="0.60" width="3.00" height="0.60" fill="#555"/></svg>
<svg class="b" style="left:717px;top:421px" width="52" height="2"><rect x="0.00" y="0.60" width="52.00" height="0.60" fill="#8a8a8a"/></svg>
<svg class="b" style="left:741px;top:418px" width="4" height="6"><rect x="0.70" y="0.20" width="2.50" height="5.80" fill="#3c3c3c"/></svg>
<svg class="b" style="left:771px;top:421px" width="4" height="2"><rect x="0.20" y="0.60" width="3.40" height="0.60" fill="#555"/></svg>
<svg class="b" style="left:772px;top:420px" width="2" height="4"><rect x="0.60" y="0.20" width="0.60" height="3.40" fill="#555"/></svg>
<div class="t" style="left:782.40px;top:420.00px;font-size:5.3px;color:#606060;transform:scaleX(0.9290);transform-origin:0 0;">100%</div>
</div></body></html>
